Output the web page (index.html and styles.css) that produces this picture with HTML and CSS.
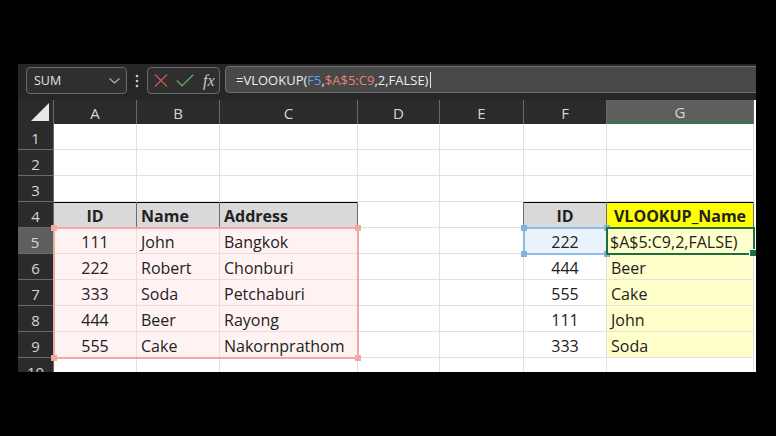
FILE: index.html
```html
<!DOCTYPE html>
<html lang="en">
<head>
    <meta charset="UTF-8">
    <title>VLOOKUP</title>
    <link rel="stylesheet" href="styles.css">
</head>
<body>
    <div class="window">
        <div class="toolbar">
            <div class="namebox">
                <span>SUM</span>
                <svg width="11" height="6" viewBox="0 0 11 6"><path d="M0.5 0.5 L5.5 5 L10.5 0.5" fill="none" stroke="#b5b5b5" stroke-width="1.1"/></svg>
            </div>
            <svg class="grip" width="4" height="14" viewBox="0 0 4 14"><circle cx="2" cy="2" r="1.3" fill="#c8c8c8"/><circle cx="2" cy="7" r="1.3" fill="#c8c8c8"/><circle cx="2" cy="12" r="1.3" fill="#c8c8c8"/></svg>
            <div class="fxbox">
                <svg width="14" height="13" viewBox="0 0 14 13"><path d="M1 0.5 L13 12.5 M13 0.5 L1 12.5" stroke="#d0524f" stroke-width="1.3"/></svg>
                <svg width="18" height="13" viewBox="0 0 18 13"><path d="M0.8 6.5 L6 11.8 L17.2 0.8" fill="none" stroke="#5fa862" stroke-width="1.4"/></svg>
                <span class="fx">fx</span>
            </div>
            <div class="formula">
                <span>=VLOOKUP(</span><span class="ref-blue">F5</span><span>,</span><span class="ref-red">$A$5:C9</span><span>,2,FALSE)</span><span class="caret"></span>
            </div>
        </div>

        <div class="sheet">
            <div class="corner"><svg width="18" height="18" viewBox="0 0 18 18"><path d="M18 0 L18 18 L0 18 Z" fill="#e8e8e8"/></svg></div>
            <div class="colhead">A</div>
            <div class="colhead">B</div>
            <div class="colhead">C</div>
            <div class="colhead">D</div>
            <div class="colhead">E</div>
            <div class="colhead">F</div>
            <div class="colhead selected">G</div>

            <div class="rowhead">1</div>
            <div class="cell"></div><div class="cell"></div><div class="cell"></div><div class="cell"></div><div class="cell"></div><div class="cell"></div><div class="cell"></div>

            <div class="rowhead">2</div>
            <div class="cell"></div><div class="cell"></div><div class="cell"></div><div class="cell"></div><div class="cell"></div><div class="cell"></div><div class="cell"></div>

            <div class="rowhead">3</div>
            <div class="cell"></div><div class="cell"></div><div class="cell"></div><div class="cell"></div><div class="cell"></div><div class="cell"></div><div class="cell"></div>

            <div class="rowhead">4</div>
            <div class="cell th center">ID</div>
            <div class="cell th">Name</div>
            <div class="cell th">Address</div>
            <div class="cell"></div>
            <div class="cell edge"></div>
            <div class="cell th center">ID</div>
            <div class="cell th yellow center">VLOOKUP_Name</div>

            <div class="rowhead selected">5</div>
            <div class="cell pink center anchor">111
                <div class="range-red"><i class="h tl"></i><i class="h tr"></i><i class="h bl"></i><i class="h br"></i></div>
            </div>
            <div class="cell pink">John</div>
            <div class="cell pink">Bangkok</div>
            <div class="cell"></div>
            <div class="cell"></div>
            <div class="cell blue center anchor">222
                <div class="range-blue"><i class="h tl"></i><i class="h tr"></i><i class="h bl"></i><i class="h br"></i></div>
            </div>
            <div class="cell light anchor editing">$A$5:C9,2,FALSE)
                <div class="active"><i class="fill"></i></div>
            </div>

            <div class="rowhead">6</div>
            <div class="cell pink center">222</div>
            <div class="cell pink">Robert</div>
            <div class="cell pink">Chonburi</div>
            <div class="cell"></div>
            <div class="cell"></div>
            <div class="cell center">444</div>
            <div class="cell light">Beer</div>

            <div class="rowhead">7</div>
            <div class="cell pink center">333</div>
            <div class="cell pink">Soda</div>
            <div class="cell pink">Petchaburi</div>
            <div class="cell"></div>
            <div class="cell"></div>
            <div class="cell center">555</div>
            <div class="cell light">Cake</div>

            <div class="rowhead">8</div>
            <div class="cell pink center">444</div>
            <div class="cell pink">Beer</div>
            <div class="cell pink">Rayong</div>
            <div class="cell"></div>
            <div class="cell"></div>
            <div class="cell center">111</div>
            <div class="cell light">John</div>

            <div class="rowhead">9</div>
            <div class="cell pink center">555</div>
            <div class="cell pink">Cake</div>
            <div class="cell pink">Nakornprathom</div>
            <div class="cell"></div>
            <div class="cell"></div>
            <div class="cell center">333</div>
            <div class="cell light">Soda</div>

            <div class="rowhead">10</div>
            <div class="cell"></div><div class="cell"></div><div class="cell"></div><div class="cell"></div><div class="cell"></div><div class="cell"></div><div class="cell"></div>
        </div>
    </div>
</body>
</html>
```

FILE: styles.css
```css
body {
    margin: 0;
    padding: 0;
    background-color: #000;
    font-family: "Open Sans", sans-serif;
}
.window {
    width: 738px;
    height: 308px;
    margin: 64px 0 0 18px;
    background: #262626;
    overflow: hidden;
}

/* formula bar */
.toolbar {
    height: 36px;
    display: flex;
    align-items: flex-start;
    padding: 2px 0 0 8px;
    box-sizing: border-box;
}
.namebox {
    width: 101px;
    height: 27px;
    margin-top: 1px;
    box-sizing: border-box;
    border: 1px solid #6a6a6a;
    border-radius: 4px;
    background: #2f2f2f;
    display: flex;
    align-items: center;
    justify-content: space-between;
    padding: 0 6px 0 7px;
    color: #e2e2e2;
    font-size: 12.5px;
}
.grip {
    margin: 8px 8px 0 8px;
}
.fxbox {
    width: 73px;
    height: 27px;
    margin-top: 1px;
    box-sizing: border-box;
    border: 1px solid #6a6a6a;
    border-radius: 4px;
    background: #2f2f2f;
    display: flex;
    align-items: center;
    gap: 8px;
    padding: 0 0 0 6px;
}
.fx {
    font-family: "Liberation Serif", serif;
    font-style: italic;
    font-size: 16px;
    color: #c8c8c8;
    margin-left: 1px;
}
.formula {
    flex: 1;
    height: 27px;
    margin-left: 5px;
    margin-right: -6px;
    box-sizing: border-box;
    border: 1px solid #707070;
    border-radius: 4px;
    background: #484848;
    display: flex;
    align-items: center;
    padding-left: 10px;
    color: #ededed;
    font-size: 13px;
}
.ref-blue {
    color: #5aa6e6;
}
.ref-red {
    color: #e8807a;
}
.caret {
    width: 1px;
    height: 16px;
    background: #e6e6e6;
    margin-left: 2px;
}

/* grid */
.sheet {
    display: grid;
    grid-template-columns: 36px 83px 83px 138px 82px 84px 83px 147px;
    grid-template-rows: 24px repeat(10, 26px);
    height: 272px;
    overflow: hidden;
    background: #fff;
    font-size: 16px;
    color: #222;
}
.corner {
    background: #2b2b2b;
    border-right: 1px solid #6a6a6a;
    box-sizing: border-box;
    display: flex;
    align-items: flex-end;
    justify-content: flex-end;
    padding: 0 4px 3px 0;
}
.colhead {
    background: #2b2b2b;
    color: #d6d6d6;
    font-size: 15px;
    border-right: 1px solid #6a6a6a;
    box-sizing: border-box;
    display: flex;
    align-items: center;
    justify-content: center;
    padding-top: 1px;
}
.colhead.selected {
    background: #5e5e5e;
    border-bottom: 2px solid #2d7a4c;
}
.rowhead {
    background: #2b2b2b;
    color: #d6d6d6;
    font-size: 15px;
    border-right: 1px solid #6a6a6a;
    border-bottom: 1px solid #6a6a6a;
    box-sizing: border-box;
    display: flex;
    align-items: center;
    justify-content: center;
    padding-top: 2px;
}
.rowhead.selected {
    background: #5e5e5e;
    border-right: 2px solid #2d7a4c;
}
.cell {
    border-right: 1px solid #e1e1e1;
    border-bottom: 1px solid #e1e1e1;
    box-sizing: border-box;
    padding: 3px 4px 0 4px;
    line-height: 22px;
    white-space: nowrap;
}
.center {
    text-align: center;
}
.th {
    background: #d9d9d9;
    font-weight: bold;
    box-shadow: inset 0 1px 0 #000;
    border-right: 1px solid #6e6e6e;
}
.edge {
    border-right: 1px solid #6e6e6e;
}
.yellow {
    background: #ffff00;
}
.pink {
    background: #fff2f2;
    border-color: #f1dad7;
}
.blue {
    background: #eaf3fb;
}
.light {
    background: #ffffcc;
}
.editing {
    padding-left: 3px;
}

/* range highlights */
.anchor {
    position: relative;
}
.range-red,
.range-blue,
.active {
    position: absolute;
    left: -1px;
    top: -1px;
    box-sizing: border-box;
}
.range-red {
    width: 306px;
    height: 132px;
    border: 2px solid #eeaaa4;
}
.range-blue {
    width: 85px;
    height: 28px;
    border: 2px solid #8dbbe4;
}
.active {
    width: 149px;
    height: 28px;
    border: 2px solid #1f6e40;
}
.h {
    position: absolute;
    width: 6px;
    height: 6px;
}
.range-red .h {
    background: #efaaa4;
}
.range-blue .h {
    background: #7fb2e0;
}
.tl { left: -4px; top: -4px; }
.tr { right: -4px; top: -4px; }
.bl { left: -4px; bottom: -4px; }
.br { right: -4px; bottom: -4px; }
.fill {
    position: absolute;
    right: -4px;
    bottom: -4px;
    width: 6px;
    height: 6px;
    background: #1f6e40;
    border: 1px solid #fff;
}
```
